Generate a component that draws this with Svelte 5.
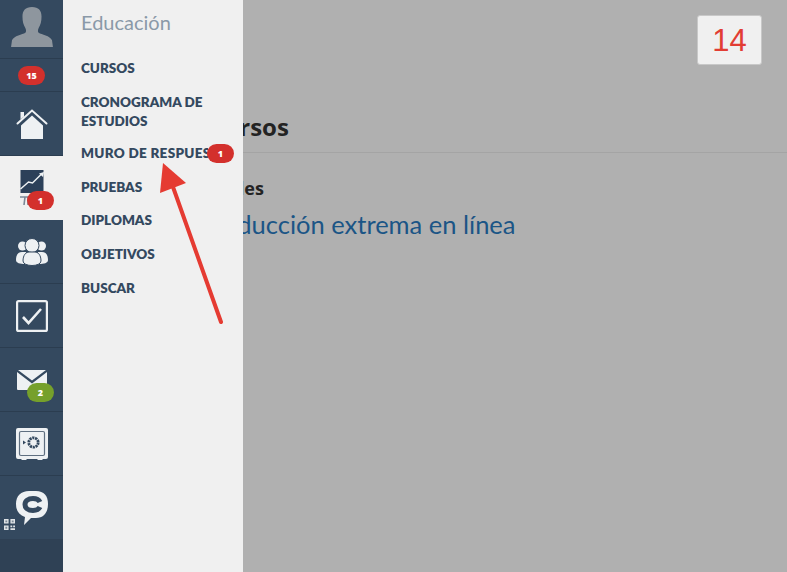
<script>
    const menu = [
        { label: "Cursos" },
        { label: "Cronograma de estudios" },
        { label: "Muro de respuestas", badge: 1 },
        { label: "Pruebas" },
        { label: "Diplomas" },
        { label: "Objetivos" },
        { label: "Buscar" },
    ];
</script>

<div class="page">
    <nav class="rail">
        <div class="avatar">
            <svg width="42" height="40" viewBox="0 0 44 42">
                <path fill="#8e969e" d="M22 0c7 0 10 4 10 10 0 5-1 9-3 12-1 2-1 4 0 5 3 2 12 3 14 8l1 7H0l1-7c2-5 11-6 14-8 1-1 1-3 0-5-2-3-3-7-3-12C12 4 15 0 22 0z" />
            </svg>
        </div>
        <div class="counter"><span class="badge">15</span></div>
        <div class="item">
            <svg width="32" height="32" viewBox="0 0 32 32">
                <path fill="#eef1f3" d="M5 17.500 16 7.500l11 10V31H5z" />
                <path fill="none" stroke="#eef1f3" stroke-width="2" stroke-linecap="round" d="M1.500 15.500 16 2.500l14.500 13" />
                <path fill="#eef1f3" d="M4.500 4h3.500v4.500l-3.500 3z" />
            </svg>
        </div>
        <div class="item active">
            <svg width="32" height="36" viewBox="0 0 32 36">
                <path fill="#2c4059" d="M4.500 0h23v23h-23z" />
                <path fill="none" stroke="#eef1f3" stroke-width="1.500" d="M4.500 19l8-7 4 1 9-9" />
                <path fill="#eef1f3" d="M23 3.500l5-1.500-1 5z" />
                <path fill="none" stroke="#7a8896" stroke-width="1.600" d="M4 27h11M9 27l-1 8M12 27v8" />
            </svg>
            <span class="badge over">1</span>
        </div>
        <div class="item">
            <svg width="32" height="28" viewBox="0 0 32 28">
                <circle fill="#eef1f3" cx="6.500" cy="8" r="4.500" />
                <circle fill="#eef1f3" cx="25.500" cy="8" r="4.500" />
                <path fill="#eef1f3" d="M0 22c0-5 2-8 6-8h4l-1 12c-5 0-9-1-9-4zM32 22c0-5-2-8-6-8h-4l1 12c5 0 9-1 9-4z" />
                <circle fill="#eef1f3" stroke="#34495f" cx="16" cy="7.500" r="7" />
                <path fill="#eef1f3" stroke="#34495f" d="M7 23c0-6 3-9 6-9h6c3 0 6 3 6 9 0 6-18 6-18 0z" />
            </svg>
        </div>
        <div class="item">
            <svg width="32" height="32" viewBox="0 0 32 32">
                <rect fill="none" stroke="#eef1f3" stroke-width="2.200" x="1.100" y="1.100" width="29.800" height="29.800" rx="1.500" />
                <path fill="none" stroke="#eef1f3" stroke-width="2.600" d="M7 17l5.500 6L25 9" />
            </svg>
        </div>
        <div class="item">
            <svg width="30" height="20" viewBox="0 0 30 20">
                <path fill="#eef1f3" d="M1 0h28L15 10.500z" />
                <path fill="#eef1f3" d="M0 2l15 11.500L30 2v17a1 1 0 0 1-1 1H1a1 1 0 0 1-1-1z" />
            </svg>
            <span class="badge over green">2</span>
        </div>
        <div class="item">
            <svg width="32" height="32" viewBox="0 0 32 32">
                <path fill="#eef1f3" d="M2 0h28a2 2 0 0 1 2 2v27a2 2 0 0 1-2 2h-3l-1 1h-4l-1-1H11l-1 1H6l-1-1H2a2 2 0 0 1-2-2V2a2 2 0 0 1 2-2z" />
                <rect fill="none" stroke="#5f6f80" stroke-width="1.200" x="3.500" y="3.500" width="25" height="24" rx="1.500" />
                <circle fill="none" stroke="#34495f" stroke-width="2.800" stroke-dasharray="2.200 0.700" cx="17.500" cy="14.500" r="4.700" />
                <path fill="#34495f" d="M7 12.500l3 2-3 2z" />
            </svg>
        </div>
        <div class="item last">
            <svg width="32" height="34" viewBox="0 0 32 34">
                <path fill="#eef1f3" d="M13 0h7c8 0 12 5 12 13s-4 14-12 14h-5l-7 7 1-8C3 24 0 20 0 13 0 5 5 0 13 0z" />
                <path fill="none" stroke="#34495f" stroke-width="5" d="M24 11c-1-2-3-3.500-7-3.500-5 0-8 2.500-8 6s3 6 8 6c4 0 6-1.500 7-3.500" />
            </svg>
            <svg class="qr" width="11" height="11" viewBox="0 0 12 12">
                <path fill="#dfe3e6" d="M0 0h5v5H0zM7 0h5v5H7zM0 7h5v5H0zM7 7h2v2H7zM10 7h2v2h-2zM7 10h5v2H7z" />
                <path fill="#7d8a97" d="M1.500 1.500h2v2h-2zM8.500 1.500h2v2h-2zM1.500 8.500h2v2h-2z" />
            </svg>
        </div>
        <div class="rail-end"></div>
    </nav>

    <main class="content">
        <div class="date"><span>14</span></div>
        <h1>Mis cursos</h1>
        <h2>Cursos actuales</h2>
        <a href="#curso">Producción extrema en línea</a>
    </main>

    <aside class="panel">
        <h3>Educación</h3>
        <ul>
            {#each menu as entry}
                <li class:flagged={entry.badge}>
                    <span class="text">{entry.label}</span>
                    {#if entry.badge}
                        <span class="badge">{entry.badge}</span>
                    {/if}
                </li>
            {/each}
        </ul>
    </aside>

    <svg class="arrow" width="70" height="170" viewBox="0 0 70 170">
        <path fill="none" stroke="#e53b32" stroke-width="4" stroke-linecap="round" d="M61 160 13 25" />
        <path fill="#e53b32" d="M3 1 26 21 0 31z" />
    </svg>
</div>

<style>
    :global(body) {
        margin: 0;
    }
    .page {
        position: relative;
        display: flex;
        width: 787px;
        height: 572px;
        overflow: hidden;
        background: #b0b0b0;
        font-family: Lato, "Open Sans", sans-serif;
    }
    .rail {
        display: flex;
        flex-direction: column;
        flex: none;
        width: 63px;
        background: #34495f;
    }
    .avatar {
        display: flex;
        justify-content: center;
        align-items: flex-start;
        box-sizing: border-box;
        height: 59px;
        padding-top: 7px;
        border-bottom: 1px solid #2b3d50;
    }
    .counter {
        display: flex;
        justify-content: center;
        align-items: center;
        height: 32px;
        border-bottom: 1px solid #2b3d50;
    }
    .item {
        position: relative;
        display: flex;
        justify-content: center;
        align-items: center;
        height: 63px;
        border-bottom: 1px solid #2b3d50;
    }
    .item.last {
        border-bottom: 0;
    }
    .active {
        background: #f0f0f0;
        border-bottom: 0;
        height: 64px;
    }
    .rail-end {
        flex: 1;
        background: #2f4155;
    }
    .badge {
        display: inline-flex;
        justify-content: center;
        align-items: center;
        width: 27px;
        height: 19px;
        border-radius: 10px;
        background: #d3302c;
        color: #fff;
        font-family: "Open Sans", sans-serif;
        font-size: 9px;
        font-weight: 800;
    }
    .over {
        position: absolute;
        left: 27px;
        top: 35px;
    }
    .green {
        background: #76a02b;
    }
    .qr {
        position: absolute;
        left: 4px;
        top: 43px;
    }
    .content {
        flex: 1;
        display: flex;
        flex-direction: column;
        color: #232323;
    }
    .date {
        align-self: flex-end;
        display: flex;
        justify-content: center;
        align-items: center;
        box-sizing: border-box;
        width: 65px;
        height: 50px;
        margin: 15px 25px 0 0;
        padding-top: 1px;
        border: 1px solid #c8c8c8;
        border-radius: 3px;
        background: #f0f0f0;
        color: #e23d33;
        font-family: "Liberation Sans", sans-serif;
        font-size: 31px;
    }
    h1 {
        margin: 47px 0 0;
        padding: 0 0 11px 100px;
        border-bottom: 1px solid #a4a4a4;
        font-family: "Open Sans", sans-serif;
        font-size: 24px;
        line-height: 29px;
        font-weight: 700;
    }
    h2 {
        margin: 25px 0 0;
        padding-left: 60px;
        font-family: "Open Sans", sans-serif;
        font-size: 18px;
        line-height: 21px;
        font-weight: 700;
    }
    a {
        margin-top: 10px;
        padding-left: 136px;
        color: #1b5586;
        font-size: 25.500px;
        line-height: 30px;
        text-decoration: none;
        white-space: nowrap;
    }
    .panel {
        position: absolute;
        left: 63px;
        top: 0;
        bottom: 0;
        width: 180px;
        box-sizing: border-box;
        padding-left: 18px;
        background: #f0f0f0;
    }
    h3 {
        margin: 10px 0 0;
        color: #8a99a8;
        font-size: 20px;
        line-height: 24px;
        font-weight: 400;
    }
    ul {
        list-style: none;
        margin: 25px 0 0;
        padding: 0;
    }
    li {
        position: relative;
        margin-bottom: 14.600px;
        color: #34495f;
        font-size: 13.500px;
        line-height: 19px;
        font-weight: 800;
        text-transform: uppercase;
    }
    li.flagged {
        margin-top: -1px;
    }
    .flagged .text {
        display: block;
        width: 127px;
        overflow: hidden;
        white-space: nowrap;
        letter-spacing: 0.300px;
    }
    li .badge {
        position: absolute;
        left: 126px;
        top: 0;
    }
    .arrow {
        position: absolute;
        left: 160px;
        top: 162px;
    }
</style>
